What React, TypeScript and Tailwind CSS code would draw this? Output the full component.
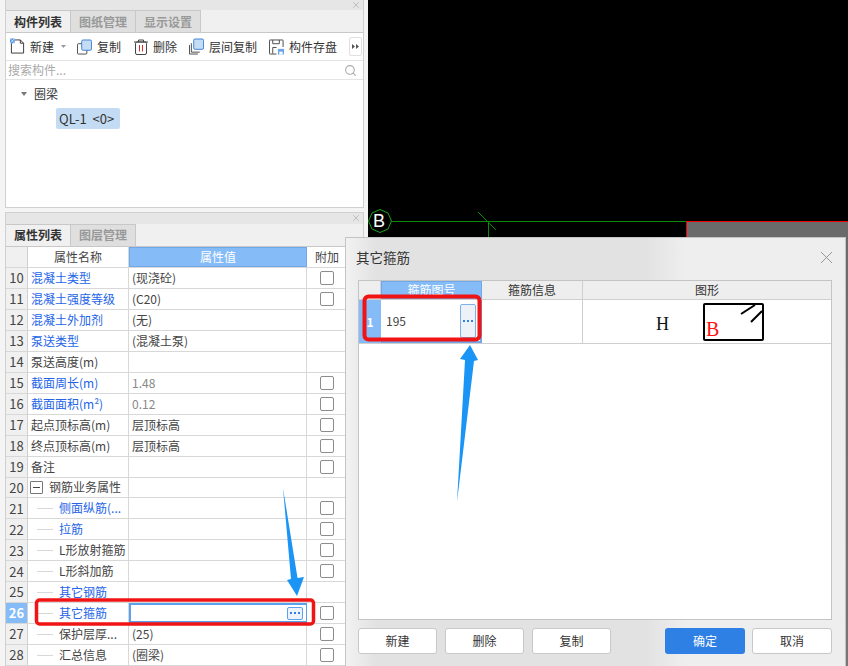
import type { ReactNode } from 'react';
import { X, Search } from 'lucide-react';

type Row = {
  no: number;
  name: string;
  blue?: boolean;
  value?: string;
  muted?: boolean;
  check?: boolean;
  child?: boolean;
  group?: boolean;
  active?: boolean;
};

const rows: Row[] = [
  { no: 10, name: '混凝土类型', blue: true, value: '(现浇砼)', check: true },
  { no: 11, name: '混凝土强度等级', blue: true, value: '(C20)', check: true },
  { no: 12, name: '混凝土外加剂', blue: true, value: '(无)' },
  { no: 13, name: '泵送类型', blue: true, value: '(混凝土泵)' },
  { no: 14, name: '泵送高度(m)' },
  { no: 15, name: '截面周长(m)', blue: true, value: '1.48', muted: true, check: true },
  { no: 16, name: '截面面积(m²)', blue: true, value: '0.12', muted: true, check: true },
  { no: 17, name: '起点顶标高(m)', value: '层顶标高', check: true },
  { no: 18, name: '终点顶标高(m)', value: '层顶标高', check: true },
  { no: 19, name: '备注', check: true },
  { no: 20, name: '钢筋业务属性', group: true },
  { no: 21, name: '侧面纵筋(...', blue: true, child: true, check: true },
  { no: 22, name: '拉筋', blue: true, child: true, check: true },
  { no: 23, name: 'L形放射箍筋', child: true, check: true },
  { no: 24, name: 'L形斜加筋', child: true, check: true },
  { no: 25, name: '其它钢筋', blue: true, child: true },
  { no: 26, name: '其它箍筋', blue: true, child: true, check: true, active: true },
  { no: 27, name: '保护层厚...', value: '(25)', child: true, check: true },
  { no: 28, name: '汇总信息', value: '(圈梁)', child: true, check: true },
];

function NewIcon() {
  return (
    <svg width="15" height="17" viewBox="0 0 16 17" fill="none">
      <path d="M1.5 5v10.5h13V5L11 1.5H5" stroke="#333" strokeWidth="1" />
      <path d="M11 1.5V5h3.5" stroke="#333" strokeWidth="1" />
      <rect x="0" y="0" width="5" height="5" fill="#4a90e2" />
      <path d="M0 0l5 5M5 0L0 5" stroke="#fff" strokeWidth="0.7" />
    </svg>
  );
}

function CopyIcon() {
  return (
    <svg width="15" height="16" viewBox="0 0 16 16" fill="none">
      <rect x="0.5" y="4.5" width="10" height="11" rx="1" stroke="#444" fill="#fff" />
      <rect x="5" y="0.5" width="10.5" height="11" rx="1.5" stroke="#3b7fd4" fill="#c5dcf5" />
    </svg>
  );
}

function TrashIcon() {
  return (
    <svg width="14" height="16" viewBox="0 0 14 16" fill="none">
      <path d="M0 3h14M4.5 3V1h5v2" stroke="#444" />
      <rect x="1.5" y="3" width="11" height="12.5" rx="1.5" stroke="#444" />
      <path d="M5.5 6v6.5" stroke="#d92b2b" />
      <path d="M8.5 6v6.5" stroke="#d92b2b" />
    </svg>
  );
}

function FloorCopyIcon() {
  return (
    <svg width="15" height="17" viewBox="0 0 16 17" fill="none">
      <path d="M0.5 7v9.5h9" stroke="#444" />
      <path d="M2.5 5v9.5h9" stroke="#444" />
      <rect x="5" y="0.5" width="10.5" height="11" rx="1.5" stroke="#3b7fd4" fill="#c5dcf5" />
    </svg>
  );
}

function SaveIcon() {
  return (
    <svg width="15" height="16" viewBox="0 0 16 16" fill="none">
      <path d="M8 15.5H1a.5.5 0 0 1-.5-.5V1A.5.5 0 0 1 1 .5h13.5a.5.5 0 0 1 .5.5v7" stroke="#444" />
      <path d="M4 .5v4h7v-4" stroke="#444" />
      <path d="M4 15V8.5h4" stroke="#444" />
      <rect x="9.5" y="10" width="6.5" height="6" fill="#6aa5e6" />
      <rect x="11" y="13" width="3.5" height="3" fill="#fff" />
    </svg>
  );
}

function Dots() {
  return (
    <svg width="10" height="2" viewBox="0 0 10 2">
      <rect x="0" y="0" width="2" height="2" fill="#2f80e4" />
      <rect x="4" y="0" width="2" height="2" fill="#2f80e4" />
      <rect x="8" y="0" width="2" height="2" fill="#2f80e4" />
    </svg>
  );
}

function CheckCell() {
  return <div className="w-[14px] h-[14px] border border-[#8c8c8c] rounded-[2px] bg-white" />;
}

function ToolButton({ icon, label, className }: { icon: ReactNode; label: string; className: string }) {
  return (
    <div className={`flex items-center gap-[5px] ${className}`}>
      {icon}
      <span>{label}</span>
    </div>
  );
}

function Tab({ label, active }: { label: string; active?: boolean }) {
  return (
    <div
      className={`w-[65px] h-[22px] flex items-center justify-center border-r border-t border-[#c8c8c8] font-bold ${
        active ? 'bg-[#f0f0f0] text-[#333]' : 'bg-[#dfdfdf] text-[#999]'
      }`}
    >
      {label}
    </div>
  );
}

function PanelTitle({ className }: { className: string }) {
  return (
    <div className={`bg-[#e6e6e6] flex items-center justify-end pr-[2px] ${className}`}>
      <X size={10} strokeWidth={1.2} className="text-[#999]" />
    </div>
  );
}

function PropertyRow({ row }: { row: Row }) {
  return (
    <div className="flex h-[21px] border-b border-[#d8d8d8] bg-white">
      <div
        className={`w-[22px] shrink-0 flex items-center justify-center border-r border-[#d0d0d0] text-[13px] ${
          row.active ? 'bg-[#85bbf7] text-white font-bold' : 'bg-[#f0f0f0] text-[#444]'
        }`}
      >
        {row.no}
      </div>
      <div className="w-[101px] shrink-0 flex items-center border-r border-[#d8d8d8] overflow-hidden whitespace-nowrap">
        {row.group && (
          <div className="ml-[2px] mr-[6px] w-[13px] h-[13px] border border-[#777] rounded-[1px] flex items-center justify-center">
            <div className="w-[7px] h-px bg-[#444]" />
          </div>
        )}
        {row.child && <div className="ml-[9px] mr-[6px] w-[16px] h-px bg-[#d8d8d8]" />}
        <span className={`${row.blue ? 'text-[#2464e8]' : 'text-[#444]'} ${!row.group && !row.child ? 'ml-[3px]' : ''}`}>
          {row.name}
        </span>
      </div>
      <div
        className={`w-[178px] shrink-0 flex items-center justify-between border-r ${
          row.active ? 'border-l-2 border-y-2 border-[#5ba2ee] pr-[3px]' : 'border-[#d8d8d8] pl-[3px]'
        } ${row.muted ? 'text-[#888]' : 'text-[#444]'}`}
      >
        <span>{row.value}</span>
        {row.active && (
          <div className="shrink-0 w-[16px] h-[13px] border border-[#5ba2ee] rounded-[2px] bg-[#edf3fb] flex items-center justify-center">
            <Dots />
          </div>
        )}
      </div>
      <div className="flex-1 flex items-center pl-[13px]">{row.check && <CheckCell />}</div>
    </div>
  );
}

function Footer({ label, primary, className }: { label: string; primary?: boolean; className: string }) {
  return (
    <div
      className={`shrink-0 h-[26px] rounded-[3px] flex items-center justify-center ${className} ${
        primary ? 'bg-[#2e80e4] text-white' : 'bg-white border border-[#c8c8c8] text-[#333]'
      }`}
    >
      {label}
    </div>
  );
}

function Dialog() {
  return (
    <div className="absolute left-[345px] top-[237px] w-[501px] h-[429px] pl-[12px] pr-[13px] border-t border-l border-r border-[#c4c4c4] bg-[linear-gradient(90deg,#f2f2f2_0%,#e2e2e2_6%,#e2e2e2_60%,#eeeeee_68%,#eeeeee_100%)]">
      <div className="h-[42px] flex items-center justify-between pb-[4px] text-[13.5px] text-[#333]">
        <span className="-ml-[2px]">其它箍筋</span>
        <X size={21} strokeWidth={1} className="-mr-[5px] text-[#8c8c8c]" />
      </div>
      <div className="h-[340px] border border-[#c4c4c4] bg-white">
        <div className="flex h-[19px] bg-[#eeeeee] border-b border-[#cfcfcf]">
          <div className="w-[22px] border-r border-[#cfcfcf]" />
          <div className="w-[101px] bg-[#85bbf7] border border-[#6fa9ea] text-white flex items-center justify-center">箍筋图号</div>
          <div className="w-[101px] flex items-center justify-center border-r border-[#cfcfcf] text-[#333]">箍筋信息</div>
          <div className="flex-1 flex items-center justify-center text-[#333]">图形</div>
        </div>
        <div className="flex h-[44px] border-b border-[#cfcfcf]">
          <div className="w-[22px] bg-[#85bbf7] text-white font-bold flex items-center justify-center">1</div>
          <div className="w-[101px] flex items-center justify-between pl-[5px] pr-[4px] text-[#444] border-b-2 border-r-2 border-[#6fa9ea]">
            <span>195</span>
            <div className="w-[16px] h-[34px] border border-[#7fb0e8] rounded-[2px] bg-[#edf1f8] flex items-center justify-center">
              <Dots />
            </div>
          </div>
          <div className="w-[101px] border-r border-[#cfcfcf]" />
          <div className="flex-1 flex items-center pl-[73px] pt-[4px]">
            <span className="w-[47px] font-['Liberation_Serif',serif] text-[18px] leading-none text-[#111]">H</span>
            <div className="relative w-[61px] h-[38px] border-2 border-black rounded-[2px] -mt-[4px]">
              <span className="absolute left-[1px] bottom-[0px] font-['Liberation_Serif',serif] text-[20px] leading-none text-[#f11]">B</span>
              <svg className="absolute right-0 top-0" width="30" height="18" viewBox="0 0 30 18" fill="none">
                <path d="M9 9L23 0M19 17L30 6" stroke="#000" strokeWidth="2" />
              </svg>
            </div>
          </div>
        </div>
      </div>
      <div className="flex mt-[8px] gap-[8px]">
        <Footer label="新建" className="w-[79px]" />
        <Footer label="删除" className="w-[79px]" />
        <Footer label="复制" className="w-[79px]" />
        <div className="ml-[46px] flex gap-[7px]">
          <Footer label="确定" primary className="w-[80px]" />
          <Footer label="取消" className="w-[80px]" />
        </div>
      </div>
    </div>
  );
}

export default function App() {
  return (
    <div className="relative w-[848px] h-[666px] overflow-hidden flex bg-white text-[12px] font-['Noto_Sans_CJK_SC','Noto_Sans',sans-serif]">
      <div className="w-[368px] shrink-0 pl-[5px] pr-[4px] bg-[#f4f4f4] flex flex-col">
        <div className="h-[208px] border-x border-b border-[#d0d0d0] flex flex-col bg-white">
          <PanelTitle className="h-[10px]" />
          <div className="flex h-[23px] bg-[#f0f0f0] border-b border-[#c8c8c8]">
            <Tab label="构件列表" active />
            <Tab label="图纸管理" />
            <Tab label="显示设置" />
          </div>
          <div className="h-[28px] flex items-center bg-white border-b border-[#e4e4e4] text-[#333]">
            <ToolButton icon={<NewIcon />} label="新建" className="ml-[4px]" />
            <svg className="ml-[7px]" width="5" height="3" viewBox="0 0 5 3">
              <path d="M0 0h5L2.5 3z" fill="#999" />
            </svg>
            <ToolButton icon={<CopyIcon />} label="复制" className="ml-[11px]" />
            <ToolButton icon={<TrashIcon />} label="删除" className="ml-[13px]" />
            <ToolButton icon={<FloorCopyIcon />} label="层间复制" className="ml-[12px]" />
            <ToolButton icon={<SaveIcon />} label="构件存盘" className="ml-[12px]" />
            <div className="ml-[12px] w-[13px] h-[19px] border border-[#e0e0e0] rounded-[2px] flex items-center justify-center">
              <svg width="7" height="5" viewBox="0 0 7 5">
                <path d="M0 0l3 2.5L0 5zM4 0l3 2.5L4 5z" fill="#555" />
              </svg>
            </div>
          </div>
          <div className="h-[19px] flex items-center justify-between pl-[2px] pr-[6px] border-b border-[#e4e4e4] text-[#aaa]">
            <span>搜索构件...</span>
            <Search size={13} className="text-[#aaa]" />
          </div>
          <div className="flex-1 pt-[4px]">
            <div className="flex items-center h-[20px] pl-[15px] text-[#333]">
              <svg width="6" height="4" viewBox="0 0 6 4">
                <path d="M0 0h6L3 4z" fill="#777" />
              </svg>
              <span className="ml-[7px]">圈梁</span>
            </div>
            <div className="mt-[4px] ml-[50px] w-[64px] h-[21px] pl-[3px] rounded-[2px] bg-[#c4dcf3] flex items-center text-[#333] text-[13px] whitespace-nowrap">
              QL-1&nbsp; &lt;0&gt;
            </div>
          </div>
        </div>
        <div className="mt-[4px] flex-1 flex flex-col border-x border-t border-[#d0d0d0] overflow-hidden">
          <PanelTitle className="h-[11px]" />
          <div className="flex h-[23px] bg-[#f0f0f0] border-b border-[#c8c8c8]">
            <Tab label="属性列表" active />
            <Tab label="图层管理" />
          </div>
          <div className="flex h-[21px] bg-white border-b border-[#d8d8d8]">
            <div className="w-[22px] bg-[#f0f0f0] border-r border-[#d0d0d0]" />
            <div className="w-[101px] flex items-center justify-center border-r border-[#d8d8d8] text-[#444]">属性名称</div>
            <div className="w-[178px] flex items-center justify-center bg-[#85bbf7] border border-[#6fa9ea] text-white">属性值</div>
            <div className="flex-1 flex items-center pl-[8px] text-[#444]">附加</div>
          </div>
          {rows.map((row) => (
            <PropertyRow key={row.no} row={row} />
          ))}
        </div>
      </div>
      <div className="relative flex-1 bg-black">
        <div className="absolute left-[318px] top-[221px] right-0 bottom-0 border-t border-l border-[#f00000] bg-[linear-gradient(180deg,#6a6a6a,#777777)]" />
        <svg className="absolute inset-0" width="480" height="300" viewBox="0 0 480 300" fill="none">
          <path d="M24 221.5H318" stroke="#0a8a0a" />
          <path d="M120.5 221.5V237" stroke="#0a8a0a" />
          <path d="M110 212L128 230" stroke="#0a8a0a" />
          <path d="M12 209.5l8 3.5 3.5 8-3.5 8-8 3.5-8-3.5-3.5-8 3.5-8z" stroke="#1aa51a" />
        </svg>
        <span className="absolute left-[5px] top-[211px] text-white text-[18px] leading-[20px] font-['Liberation_Sans',sans-serif]">B</span>
      </div>
      <Dialog />
      <svg className="absolute inset-0 pointer-events-none" width="848" height="666" viewBox="0 0 848 666" fill="none">
        <rect x="36.5" y="600" width="277" height="24" rx="3" stroke="#f01414" strokeWidth="3.5" />
        <rect x="364.5" y="296.5" width="115" height="43" rx="4" stroke="#f01414" strokeWidth="4" />
        <path d="M283 488L297.5 578L304 577L297 596L287 580L291 579Z" fill="#1a95f5" />
        <path d="M457 502L474 361L478 360L470 345L460 359L465 360Z" fill="#1a95f5" />
      </svg>
    </div>
  );
}
